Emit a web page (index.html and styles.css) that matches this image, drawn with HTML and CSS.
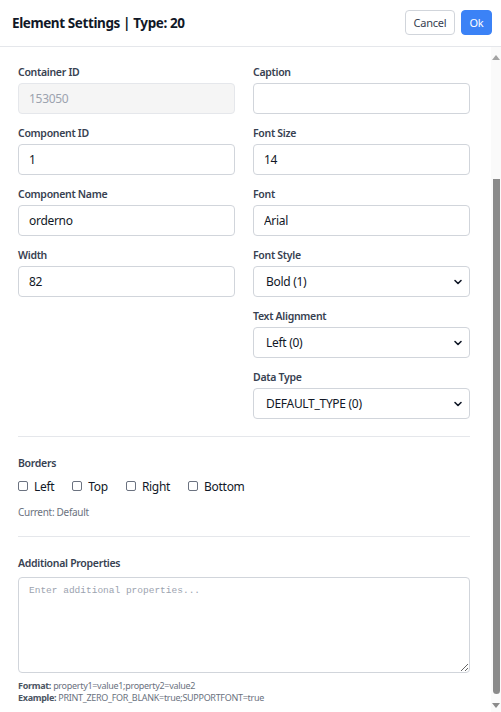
FILE: index.html
```html
<!DOCTYPE html>
<html lang="en">
<head>
<meta charset="utf-8">
<title>Element Settings</title>
<link rel="stylesheet" href="styles.css">
</head>
<body>
<div class="modal">
  <header class="modal-header">
    <h1 class="modal-title">Element Settings | Type: 20</h1>
    <div class="actions">
      <button class="btn btn-cancel" type="button">Cancel</button>
      <button class="btn btn-ok" type="button">Ok</button>
    </div>
  </header>
  <div class="modal-main">
    <div class="modal-body">
      <div class="grid">
        <div class="col">
          <div class="field">
            <label class="label">Container ID</label>
            <input class="input" type="text" value="153050" disabled>
          </div>
          <div class="field">
            <label class="label">Component ID</label>
            <input class="input" type="text" value="1">
          </div>
          <div class="field">
            <label class="label">Component Name</label>
            <input class="input" type="text" value="orderno">
          </div>
          <div class="field">
            <label class="label">Width</label>
            <input class="input" type="text" value="82">
          </div>
        </div>
        <div class="col">
          <div class="field">
            <label class="label">Caption</label>
            <input class="input" type="text" value="">
          </div>
          <div class="field">
            <label class="label">Font Size</label>
            <input class="input" type="text" value="14">
          </div>
          <div class="field">
            <label class="label">Font</label>
            <input class="input" type="text" value="Arial">
          </div>
          <div class="field">
            <label class="label">Font Style</label>
            <select class="input select"><option>Bold (1)</option></select>
          </div>
          <div class="field">
            <label class="label">Text Alignment</label>
            <select class="input select"><option>Left (0)</option></select>
          </div>
          <div class="field">
            <label class="label">Data Type</label>
            <select class="input select"><option>DEFAULT_TYPE (0)</option></select>
          </div>
        </div>
      </div>

      <section class="section borders">
        <div class="label">Borders</div>
        <div class="checks">
          <label class="check"><input type="checkbox" class="cb"><span>Left</span></label>
          <label class="check"><input type="checkbox" class="cb"><span>Top</span></label>
          <label class="check"><input type="checkbox" class="cb"><span>Right</span></label>
          <label class="check"><input type="checkbox" class="cb"><span>Bottom</span></label>
        </div>
        <div class="current">Current: Default</div>
      </section>

      <section class="section props">
        <label class="label label-props">Additional Properties</label>
        <textarea class="textarea" placeholder="Enter additional properties..."></textarea>
        <div class="hint"><b>Format:</b> property1=value1;property2=value2</div>
        <div class="hint"><b>Example:</b> PRINT_ZERO_FOR_BLANK=true;SUPPORTFONT=true</div>
      </section>
    </div>
    <div class="scrollbar">
      <div class="sb-arrow sb-up"></div>
      <div class="sb-track"><div class="sb-thumb"></div></div>
      <div class="sb-arrow sb-down"></div>
    </div>
  </div>
</div>
</body>
</html>
```

FILE: styles.css
```css
html, body {
  margin: 0;
  padding: 0;
  background: #ffffff;
}
body {
  font-family: "Noto Sans", "Open Sans", sans-serif;
  color: #111827;
  letter-spacing: -0.3px;
}
.modal {
  width: 501px;
  height: 712px;
  display: flex;
  flex-direction: column;
  overflow: hidden;
}
.modal-header {
  height: 47px;
  flex: none;
  box-sizing: border-box;
  border-bottom: 1px solid #e5e7eb;
  display: flex;
  align-items: center;
  justify-content: space-between;
  padding: 0 9px 1px 12px;
}
.modal-title {
  margin: 0;
  font-size: 13.5px;
  font-weight: 700;
  color: #111827;
  letter-spacing: -0.4px;
}
.actions {
  display: flex;
  gap: 6px;
}
.btn {
  height: 25px;
  box-sizing: border-box;
  border-radius: 4px;
  font-family: inherit;
  font-size: 11px;
  letter-spacing: -0.2px;
  padding: 0;
  cursor: pointer;
}
.btn-cancel {
  width: 50px;
  background: #ffffff;
  border: 1px solid #d1d5db;
  color: #374151;
}
.btn-ok {
  width: 31px;
  background: #3b82f6;
  border: 1px solid #3b82f6;
  color: #ffffff;
}
.modal-main {
  flex: 1;
  display: flex;
  min-height: 0;
}
.modal-body {
  flex: 1;
  padding: 18px 21px 0 18px;
}
.grid {
  display: grid;
  grid-template-columns: 1fr 1fr;
  column-gap: 18px;
  padding-bottom: 5px;
  border-bottom: 1px solid #e5e7eb;
}
.field {
  margin-bottom: 12px;
}
.label {
  display: block;
  font-size: 10.5px;
  font-weight: 600;
  line-height: 15px;
  color: #374151;
  margin-bottom: 3px;
}
.input {
  display: block;
  width: 100%;
  height: 31px;
  box-sizing: border-box;
  border: 1px solid #d1d5db;
  border-radius: 4px;
  background: #ffffff;
  padding: 0 10px;
  font-family: inherit;
  font-size: 12px;
  letter-spacing: -0.3px;
  color: #111827;
  margin: 0;
}
.input:disabled {
  background: #f5f5f5;
  border-color: #e5e7eb;
  color: #9ca3af;
}
.select {
  appearance: none;
  -webkit-appearance: none;
  padding-left: 12px;
  background-image: url("data:image/svg+xml;utf8,<svg xmlns='http://www.w3.org/2000/svg' width='10' height='10' viewBox='0 0 10 10'><path d='M2 3.5 L5 6.5 L8 3.5' fill='none' stroke='%23111827' stroke-width='1.6' stroke-linecap='round' stroke-linejoin='round'/></svg>");
  background-repeat: no-repeat;
  background-position: right 6px center;
  background-size: 10px 10px;
}
.section {
  padding-top: 19px;
}
.borders {
  padding-bottom: 17px;
  border-bottom: 1px solid #e5e7eb;
}
.borders .label {
  margin-bottom: 0;
}
.checks {
  display: flex;
  gap: 18px;
  height: 18px;
  align-items: center;
  margin-top: 6px;
}
.check {
  display: flex;
  align-items: center;
  gap: 6px;
  font-size: 12px;
  color: #111827;
}
.cb {
  appearance: none;
  -webkit-appearance: none;
  width: 10px;
  height: 10px;
  margin: 0;
  border: 1px solid #6b7280;
  border-radius: 2px;
  background: #fff;
}
.current {
  margin-top: 10px;
  font-size: 10px;
  line-height: 14px;
  color: #6b7280;
}
.props {
  padding-top: 19px;
}
.label-props {
  margin-bottom: 6px;
}
.textarea {
  display: block;
  width: 100%;
  height: 96px;
  box-sizing: border-box;
  border: 1px solid #d1d5db;
  border-radius: 4px;
  padding: 7px 10px;
  font-family: "Liberation Mono", monospace;
  font-size: 9.5px;
  letter-spacing: 0;
  margin: 0 0 7px 0;
  resize: vertical;
}
.textarea::placeholder {
  color: #9ca3af;
}
.hint {
  font-size: 9px;
  line-height: 12px;
  color: #6b7280;
}
.hint b {
  color: #4b5563;
  font-weight: 700;
}
.scrollbar {
  width: 10px;
  flex: none;
  display: flex;
  flex-direction: column;
  background: #fafafa;
}
.sb-arrow {
  height: 14px;
  flex: none;
  display: flex;
  align-items: center;
  justify-content: center;
}
.sb-up::before {
  content: "";
  border-left: 4px solid transparent;
  border-right: 4px solid transparent;
  border-bottom: 5px solid #a3a3a3;
  margin-top: 6px;
}
.sb-down::before {
  content: "";
  border-left: 4px solid transparent;
  border-right: 4px solid transparent;
  border-top: 5px solid #8a8a8a;
}
.sb-track {
  flex: 1;
  padding: 118px 1px 4px 2px;
  display: flex;
  flex-direction: column;
}
.sb-thumb {
  flex: 1;
  background: #8a8a8a;
  border-radius: 0 0 4px 4px;
}
```
